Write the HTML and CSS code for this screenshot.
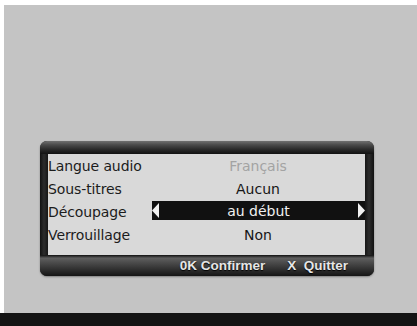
FILE: index.html
```html
<!DOCTYPE html>
<html lang="fr">
<head>
<meta charset="utf-8">
<link rel="stylesheet" href="styles.css">
</head>
<body>
<div class="page">
  <div class="screen">
    <div class="panel">
      <div class="panel-top"></div>
      <div class="panel-body">
        <div class="inner">
          <div class="row">
            <div class="label">Langue audio</div>
            <div class="value dim">Français</div>
          </div>
          <div class="row">
            <div class="label">Sous-titres</div>
            <div class="value">Aucun</div>
          </div>
          <div class="row">
            <div class="label">Découpage</div>
            <div class="value selected">
              <svg class="arrow" width="7" height="15" viewBox="0 0 7 15"><polygon points="7,0 7,15 0,7.5" fill="#f2f2f2"/></svg>
              <span class="sel-text">au début</span>
              <svg class="arrow" width="7" height="15" viewBox="0 0 7 15"><polygon points="0,0 0,15 7,7.5" fill="#f2f2f2"/></svg>
            </div>
          </div>
          <div class="row">
            <div class="label">Verrouillage</div>
            <div class="value">Non</div>
          </div>
        </div>
      </div>
      <div class="panel-foot">
        <span class="key">0K Confirmer</span>
        <span class="key">X&nbsp;&nbsp;Quitter</span>
      </div>
    </div>
  </div>
  <div class="strip"></div>
</div>
</body>
</html>
```
FILE: styles.css
```css
html, body {
  margin: 0;
  padding: 0;
  background: #ffffff;
}
.page {
  width: 417px;
  height: 326px;
  display: flex;
  flex-direction: column;
  font-family: "DejaVu Sans", "Liberation Sans", sans-serif;
}
.screen {
  margin-top: 5px;
  margin-left: 4px;
  height: 308px;
  box-sizing: border-box;
  background: #c4c4c4;
  padding-top: 136px;
  padding-left: 36px;
}
.strip {
  height: 13px;
  background: #141414;
}
.panel {
  width: 334px;
  height: 135px;
  display: flex;
  flex-direction: column;
  border-radius: 7px;
  background: #1b1b1b;
  overflow: hidden;
  box-shadow: 0 1px 2px rgba(0,0,0,0.35);
}
.panel-top {
  height: 13px;
  background: linear-gradient(to bottom, #707070 0%, #4a4a4a 30%, #2a2a2a 65%, #121212 100%);
}
.panel-body {
  padding: 0 9px 0 8px;
  background: linear-gradient(to right, #111 0px, #2c2c2c 4px, #161616 8px, #161616 calc(100% - 9px), #2c2c2c calc(100% - 5px), #111 100%);
}
.inner {
  height: 101px;
  box-sizing: border-box;
  padding-top: 1px;
  background: #d9d9d9;
}
.row {
  height: 23px;
  display: flex;
  align-items: flex-start;
}
.label {
  width: 104px;
  height: 23px;
  line-height: 23px;
  font-size: 14px;
  color: #1c1c1c;
  letter-spacing: -0.1px;
}
.value {
  flex: 1;
  height: 23px;
  line-height: 23px;
  text-align: center;
  font-size: 14px;
  color: #161616;
  padding-right: 1px;
}
.value.dim {
  color: #a3a3a3;
}
.value.selected {
  height: 19px;
  line-height: 19px;
  background: #111111;
  color: #f0f0f0;
  display: flex;
  align-items: center;
  justify-content: space-between;
  padding: 0;
}
.sel-text {
  flex: 1;
  text-align: center;
  padding-top: 2px;
}
.arrow {
  display: block;
}
.panel-foot {
  height: 21px;
  display: flex;
  align-items: center;
  justify-content: flex-end;
  gap: 22px;
  padding-right: 26px;
  background: linear-gradient(to bottom, #101010 0%, #5e5e5e 15%, #484848 40%, #2a2a2a 75%, #151515 100%);
}
.key {
  font-family: "Liberation Sans", "DejaVu Sans", sans-serif;
  font-size: 13.5px;
  font-weight: bold;
  color: #e6e6e6;
  text-shadow: 0 1px 1px #000;
}
```
